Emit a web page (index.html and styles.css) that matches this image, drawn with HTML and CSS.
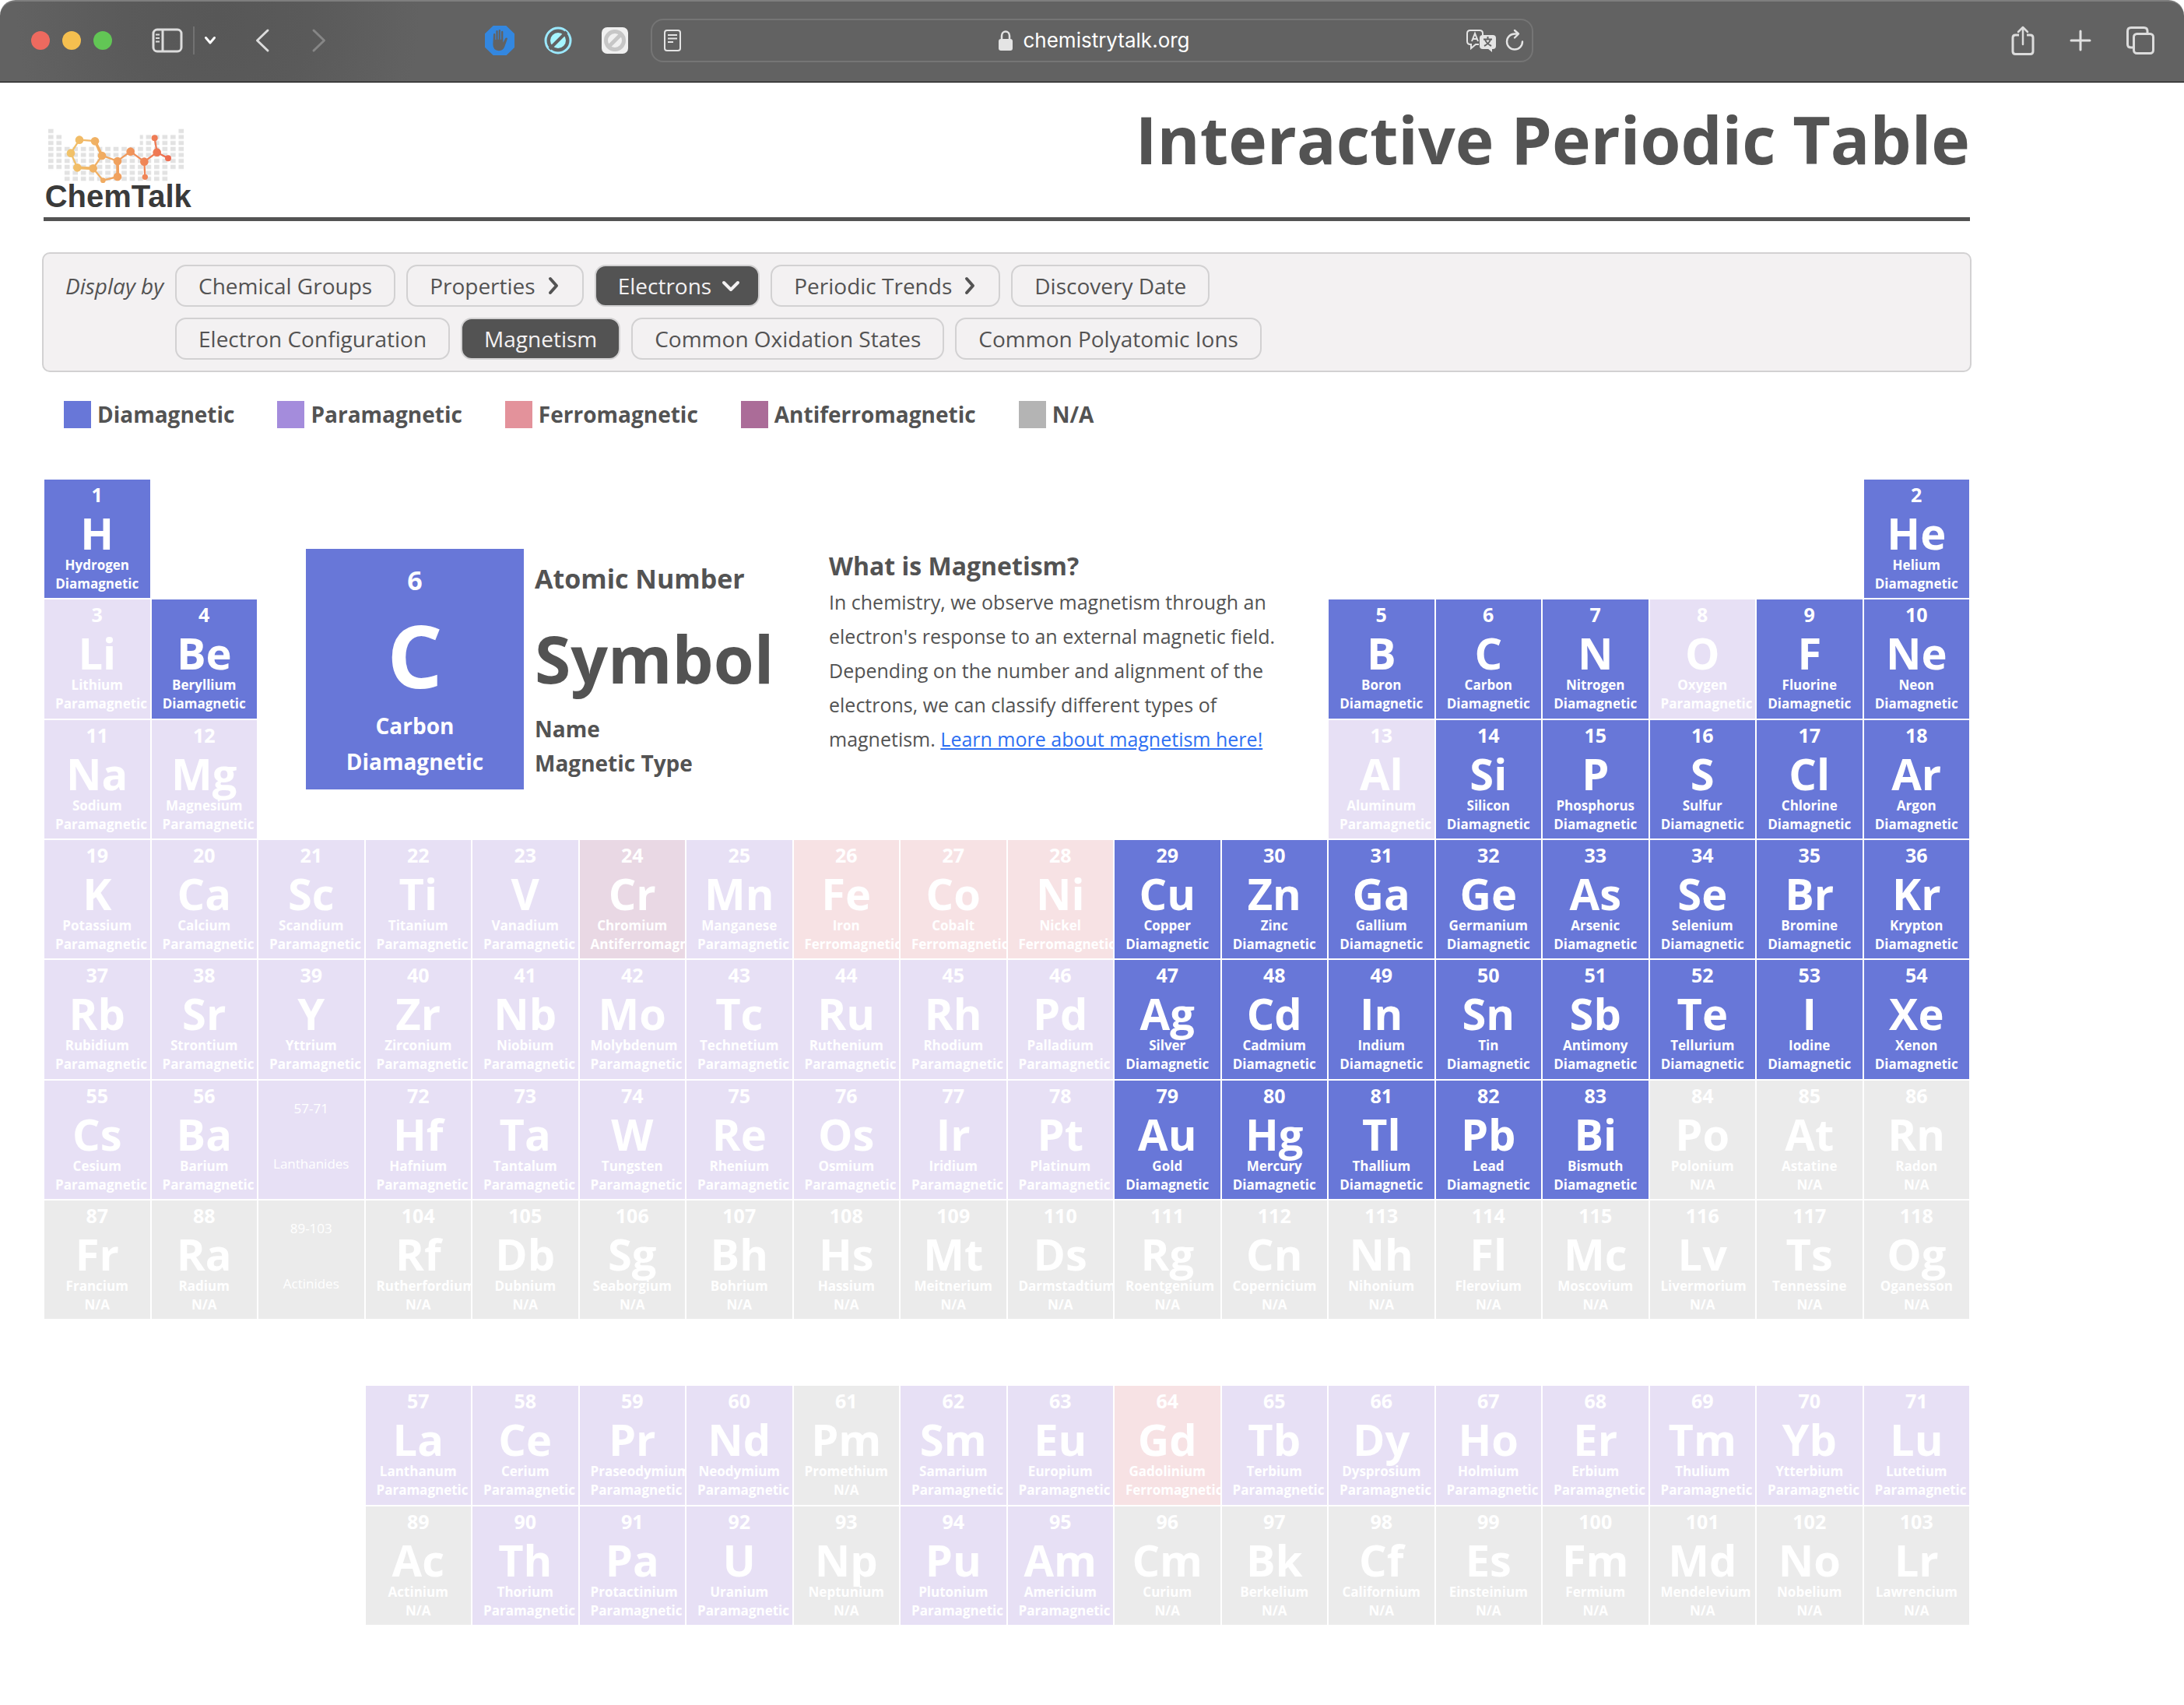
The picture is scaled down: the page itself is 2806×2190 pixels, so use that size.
FILE: index.html
```html
<!DOCTYPE html>
<html lang="en">
<head>
<meta charset="utf-8">
<title>Interactive Periodic Table</title>
<meta name="viewport" content="width=device-width, initial-scale=1">
<link rel="stylesheet" href="styles.css">
</head>
<body>
<div class="toolbar">
  <div class="toolbar-side">
    <div class="lights"><span class="light red"></span><span class="light yellow"></span><span class="light green"></span></div>
    <button class="tool sidebar" aria-label="Sidebar">
      <svg width="40" height="32" viewBox="0 0 40 32" fill="none" stroke="#dcdcdc" stroke-width="3"><rect x="2" y="2" width="36" height="28" rx="5"/><path d="M14 2v28"/><path d="M5 8.500h5M5 13h5M5 17.500h5" stroke-width="2"/></svg>
    </button>
    <span class="divider"></span>
    <button class="tool menu" aria-label="Tab groups">
      <svg width="16" height="12" viewBox="0 0 16 12" fill="none" stroke="#fff" stroke-width="3" stroke-linecap="round" stroke-linejoin="round"><path d="M2.500 2.500 8 9l5.500-6.500"/></svg>
    </button>
    <button class="tool back" aria-label="Back">
      <svg width="18" height="32" viewBox="0 0 18 32" fill="none" stroke="#dcdcdc" stroke-width="3" stroke-linecap="round" stroke-linejoin="round"><path d="M16 3 2.500 16 16 29"/></svg>
    </button>
    <button class="tool forward" aria-label="Forward">
      <svg width="18" height="32" viewBox="0 0 18 32" fill="none" stroke="#868686" stroke-width="3" stroke-linecap="round" stroke-linejoin="round"><path d="M2 3l13.500 13L2 29"/></svg>
    </button>
    <div class="extensions">
      <button class="tool" aria-label="Ad blocker">
        <svg width="38" height="38" viewBox="69 69 114 114"><path fill="#3387e0" d="M101 69h50l32 31v53l-31 30h-51l-32-31v-52z"/><path fill="#626262" d="M102 103q0-4 3.500-4t3.500 4v20h3V91q0-4 3.500-4t3.500 4v31h3V88q0-4 3.500-4t3.500 4v34h3V93q0-4 3.500-4t3.500 4v41l8-15q3-5 8-2.500 2 1-1 8l-9 25q-5 16-22 16-23 0-23-25z"/></svg>
      </button>
      <button class="tool" aria-label="Content blocker">
        <svg width="36" height="36" viewBox="0 0 36 36"><circle cx="18" cy="18" r="16" fill="none" stroke="#9be9ff" stroke-width="3"/><circle cx="18" cy="18" r="10" fill="#a6f6ff"/><path d="M7 29 29 7" stroke="#626262" stroke-width="4"/></svg>
      </button>
      <button class="tool" aria-label="Blocker settings">
        <svg width="34" height="34" viewBox="0 0 34 34"><rect width="34" height="34" rx="7" fill="#f0f0f0"/><circle cx="17" cy="17" r="11.500" fill="none" stroke="#c6c6c6" stroke-width="5"/><path d="M9 25 25 9" stroke="#c6c6c6" stroke-width="5"/></svg>
      </button>
    </div>
  </div>
  <div class="address">
    <svg width="22" height="28" viewBox="0 0 22 28" fill="none" stroke="#e4e4e4" stroke-width="2"><rect x="1" y="1" width="20" height="26" rx="3"/><path d="M5 7h12M5 11.500h12M5 16h7"/></svg>
    <div class="host">
      <svg width="20" height="26" viewBox="0 0 20 26"><rect x="1" y="11" width="18" height="15" rx="3" fill="#e4e4e4"/><path d="M5 12V7a5 5.500 0 0 1 10 0v5" fill="none" stroke="#e4e4e4" stroke-width="2.500"/></svg>
      <span>chemistrytalk.org</span>
    </div>
    <div class="address-tools">
      <svg width="40" height="30" viewBox="0 0 40 30"><path d="M17 20h-4l-6 5v-5H6q-4 0-4-4V6q0-4 4-4h12q4 0 4 4v2" fill="none" stroke="#e4e4e4" stroke-width="2"/><path d="m8 16 4-10 4 10M9.500 13h5" fill="none" stroke="#e4e4e4" stroke-width="2"/><rect x="18" y="8" width="21" height="18" rx="4" fill="#e4e4e4"/><path d="M28 25h6v5z" fill="#e4e4e4"/><path d="M28.500 10v3M23 13.500h11M25 14q2 5 8 8M32 14q-2 5-8 8" fill="none" stroke="#626262" stroke-width="2"/></svg>
      <svg width="24" height="28" viewBox="0 0 24 28" fill="none" stroke="#e4e4e4" stroke-width="2.400" stroke-linecap="round" stroke-linejoin="round"><path d="M22 16.500A10 10 0 1 1 12 6.500h4"/><path d="m12 2 5 4.500-5 5"/></svg>
    </div>
  </div>
  <div class="toolbar-side end">
    <button class="tool" aria-label="Share">
      <svg width="30" height="38" viewBox="0 0 30 38" fill="none" stroke="#dcdcdc" stroke-width="3" stroke-linecap="round" stroke-linejoin="round"><path d="M10 12H5.500Q2 12 2 15.500V33q0 3.500 3.500 3.500h19Q28 36.500 28 33V15.500Q28 12 24.500 12H20" stroke-linecap="butt"/><path d="M15 24V2.500M9 8l6-6 6 6" stroke-width="2.500"/></svg>
    </button>
    <button class="tool plus" aria-label="New tab">
      <svg width="28" height="28" viewBox="0 0 28 28" fill="none" stroke="#e0e0e0" stroke-width="3" stroke-linecap="round"><path d="M14 2v24M2 14h24"/></svg>
    </button>
    <button class="tool" aria-label="All tabs">
      <svg width="36" height="36" viewBox="0 0 36 36" fill="none" stroke="#dcdcdc" stroke-width="3"><rect x="9.500" y="9.500" width="25" height="25" rx="4"/><path d="M9 27H6q-4.500 0-4.500-4V6Q1.500 1.500 6 1.500h16.500Q27 1.500 27 6v3"/></svg>
    </button>
  </div>
</div>

<main class="page">
  <header class="masthead">
    <a class="logo" href="#" aria-label="ChemTalk">
      <svg width="192" height="106" viewBox="18 24 576 318">
        <defs>
          <pattern id="tiles" x="33" y="30" width="31.400" height="23" patternUnits="userSpaceOnUse"><rect x="3" y="2" width="20" height="16" fill="#e2e2e2"/></pattern>
          <linearGradient id="warm" gradientUnits="userSpaceOnUse" x1="110" y1="0" x2="510" y2="0"><stop offset="0" stop-color="#f1c46a"/><stop offset=".5" stop-color="#f0a05e"/><stop offset="1" stop-color="#ee6a50"/></linearGradient>
        </defs>
        <path fill="url(#tiles)" d="M33 30h27v23h31v46h298V53h145V30h28v161h-60v46H95v-46H33z"/>
        <g fill="none" stroke="url(#warm)" stroke-width="7"><path d="m209 184-61-3-25-56 33-51 60 4 27 57zM209 184l38 46 56-14v-60l-60-22M303 155l50-36 53 39 3 59M406 158l49-36-9-55M455 122l43 23"/><path stroke-width="11" d="m216 78 27 57M148 181l61 3M303 156l1 60"/></g>
        <g fill="url(#warm)"><circle cx="156" cy="74" r="16"/><circle cx="216" cy="79" r="16"/><circle cx="123" cy="125" r="16"/><circle cx="243" cy="135" r="16"/><circle cx="148" cy="181" r="16"/><circle cx="209" cy="184" r="16"/><circle cx="247" cy="230" r="10"/><circle cx="303" cy="156" r="16"/><circle cx="303" cy="216" r="16"/><circle cx="353" cy="119" r="16"/><circle cx="406" cy="158" r="16"/><circle cx="409" cy="217" r="11"/><circle cx="455" cy="122" r="16"/><circle cx="446" cy="67" r="12"/><circle cx="498" cy="145" r="12"/></g>
        <text class="logo-word" x="23" y="333">ChemTalk</text>
      </svg>
    </a>
    <h1>Interactive Periodic Table</h1>
  </header>

  <nav class="filters" aria-label="Display by">
    <span class="filters-label">Display by</span>
    <div class="filter-row">
      <button class="pill">Chemical Groups</button>
      <button class="pill">Properties<svg class="arrow" width="20" height="24" viewBox="0 0 20 24"><path d="M7 3l8 9-8 9"/></svg></button>
      <button class="pill active">Electrons<svg class="arrow" width="20" height="24" viewBox="0 0 20 24"><path d="M4 8l9 9 9-9"/></svg></button>
      <button class="pill">Periodic Trends<svg class="arrow" width="20" height="24" viewBox="0 0 20 24"><path d="M7 3l8 9-8 9"/></svg></button>
      <button class="pill">Discovery Date</button>
    </div>
    <div class="filter-row">
      <button class="pill">Electron Configuration</button>
      <button class="pill active">Magnetism</button>
      <button class="pill">Common Oxidation States</button>
      <button class="pill">Common Polyatomic Ions</button>
    </div>
  </nav>

  <ul class="legend">
    <li><span class="swatch dia"></span>Diamagnetic</li>
    <li><span class="swatch para"></span>Paramagnetic</li>
    <li><span class="swatch ferro"></span>Ferromagnetic</li>
    <li><span class="swatch anti"></span>Antiferromagnetic</li>
    <li><span class="swatch na"></span>N/A</li>
  </ul>

  <section class="elements" id="main-block" aria-label="Elements">
    <div class="key">
      <div class="key-card dia">
        <span class="key-number">6</span>
        <span class="key-symbol">C</span>
        <span class="key-line">Carbon</span>
        <span class="key-line">Diamagnetic</span>
      </div>
      <div class="key-labels">
        <span class="label-number">Atomic Number</span>
        <span class="label-symbol">Symbol</span>
        <span class="label-line">Name</span>
        <span class="label-line">Magnetic Type</span>
      </div>
      <article class="about">
        <h2>What is Magnetism?</h2>
        <p>In chemistry, we observe magnetism through an electron's response to an external magnetic field. Depending on the number and alignment of the electrons, we can classify different types of magnetism. <a href="#">Learn more about magnetism here!</a></p>
      </article>
    </div>
  </section>
  <section class="elements series" id="series-block" aria-label="Lanthanides and actinides"></section>
</main>
<script src="script.js"></script>
</body>
</html>
```
FILE: styles.css
```css
* { box-sizing: border-box; }

body {
  margin: 0;
  background: #fff;
  color: #535353;
  font-family: "Open Sans", "Noto Sans", sans-serif;
}

button {
  margin: 0;
  padding: 0;
  border: 0;
  background: none;
  color: inherit;
  font: inherit;
}

svg { display: block; flex: none; overflow: visible; }

/* Browser toolbar */
.toolbar {
  display: grid;
  grid-template-columns: 1fr minmax(0, 1134px) 1fr;
  align-items: center;
  height: 106px;
  padding-bottom: 3px;
  border-top: 2px solid #7e7e7e;
  border-bottom: 1px solid #000;
  border-radius: 20px 20px 0 0;
  background: radial-gradient(circle at 280px 20px, #575757 0, #5a5a5a 120px, #626262 260px);
}

.toolbar-side {
  display: flex;
  align-items: center;
  padding: 0 29px 0 40px;
}

.toolbar-side.end {
  justify-content: flex-end;
  gap: 45px;
  padding: 0 38px 0 0;
}

.lights { display: flex; gap: 16px; }
.light { width: 24px; height: 24px; border-radius: 50%; }
.red { background: #ed6a5f; }
.yellow { background: #f5bf4f; }
.green { background: #62c655; }

.sidebar { margin-left: 51px; }
.divider { width: 2px; height: 36px; margin-left: 13px; background: #727272; }
.menu { margin-left: 12px; }
.back { margin-left: 50px; }
.forward { margin-left: 55px; }
.extensions { display: flex; align-items: center; gap: 38px; margin-left: auto; }

.address {
  display: grid;
  grid-template-columns: 1fr auto 1fr;
  align-items: center;
  height: 56px;
  padding: 0 10px 0 15px;
  border: 2px solid #757575;
  border-radius: 16px;
}

.host {
  display: flex;
  align-items: center;
  gap: 12px;
  color: #fff;
  font: 26px/32px Inter, sans-serif;
}

.address-tools { display: flex; justify-content: flex-end; gap: 11px; }

/* Page */
.page { margin: 0 275px 0 56px; }

.masthead {
  display: flex;
  align-items: flex-start;
  justify-content: space-between;
  padding: 16px 0 10px;
  border-bottom: 5px solid #535353;
}

.logo { margin-top: 41px; }
.logo-word { fill: #3a3a3a; font: bold 120px "Liberation Sans", sans-serif; }

h1 { margin: 0; font-size: 84px; line-height: 114px; }

.filters {
  display: grid;
  grid-template-columns: 126px 1fr;
  gap: 14px 15px;
  align-items: center;
  margin: 40px -2px 0;
  padding: 14px 28px;
  border: 2px solid #d2d1d2;
  border-radius: 10px;
  background: #f3f1f2;
  font-size: 28px;
}

.filters-label { font-style: italic; white-space: nowrap; }

.filter-row {
  display: flex;
  flex-wrap: wrap;
  grid-column: 2;
  gap: 14px;
}

.pill {
  display: flex;
  align-items: center;
  padding: 6px 28px;
  border: 2px solid #d2d1d2;
  border-radius: 14px;
  line-height: 38px;
}

.pill.active { background: #535353; color: #f3f1f2; }

.arrow {
  margin-left: 12px;
  fill: none;
  stroke: currentColor;
  stroke-width: 4;
  stroke-linecap: round;
  stroke-linejoin: round;
}

.legend {
  display: flex;
  flex-wrap: wrap;
  gap: 16px 55px;
  margin: 35px 0 0;
  padding: 0 26px;
  list-style: none;
  font-size: 28px;
  font-weight: 700;
  line-height: 38px;
}

.legend li { display: flex; align-items: center; gap: 8px; }
.swatch { width: 35px; height: 35px; }

.dia { background: #6877d8; }
.para { background: #a48cdc; }
.ferro { background: #e3929b; }
.anti { background: #ab6c98; }
.na { background: #b4b4b4; }

/* Element grid */
.elements {
  display: grid;
  grid-template-columns: repeat(18, minmax(0, 1fr));
  margin-top: 64px;
}

.series { margin: 84px 0 100px; }

.cell {
  display: flex;
  flex-direction: column;
  justify-content: flex-start;
  aspect-ratio: 49 / 55;
  min-width: 0;
  min-height: 0;
  overflow: hidden;
  padding: 2px 14px 0;
  border: 1px solid #fff;
  color: #fff;
  font-weight: 700;
  text-align: center;
  white-space: nowrap;
}

.faded { opacity: 0.26; }

.number { font-size: 25px; line-height: 34px; }
.symbol {
  display: flex;
  justify-content: center;
  margin-top: 2px;
  font-size: 56px;
  line-height: 60px;
}
.name, .type { font-size: 17px; line-height: 24px; }

.range {
  gap: 47px;
  padding-top: 24px;
  font-size: 17px;
  font-weight: 400;
  line-height: 24px;
}

/* Colour key and description */
.key {
  display: flex;
  grid-area: 1 / 3 / 4 / 13;
  align-items: flex-start;
  padding: 90px 0 0 62px;
  font-weight: 700;
}

.key-card {
  display: flex;
  flex-direction: column;
  width: 280px;
  padding: 17px 0 13px;
  color: #fff;
  text-align: center;
}

.key-number { font-size: 34px; line-height: 46px; }
.key-symbol { margin-top: 5px; font-size: 112px; line-height: 136px; }
.key-line { font-size: 28px; line-height: 46px; }

.key-labels {
  display: flex;
  flex-direction: column;
  width: 378px;
  margin: 15px 0 0 14px;
}

.label-number { font-size: 34px; line-height: 46px; }
.label-symbol { margin: 20px 0 8px; font-size: 84px; line-height: 120px; }
.label-line { font-size: 28px; line-height: 44px; }

.about { width: 590px; }
.about h2 { margin: 0 0 2px; font-size: 32px; line-height: 44px; }
.about p { margin: 0; font-size: 25px; font-weight: 400; line-height: 44px; }
.about a { color: #2e6ff2; }
```
FILE: script.js
```js
// Each row: first column, grid row, then "number symbol name type" entries.
const TYPES = {
  D: ["dia", "Diamagnetic"],
  P: ["para", "Paramagnetic"],
  F: ["ferro", "Ferromagnetic"],
  A: ["anti", "Antiferromagnetic"],
  N: ["na", "N/A"]
};

const MAIN = [
  [1, 1, "1 H Hydrogen D"],
  [18, 1, "2 He Helium D"],
  [1, 2, "3 Li Lithium P,4 Be Beryllium D"],
  [13, 2, "5 B Boron D,6 C Carbon D,7 N Nitrogen D,8 O Oxygen P,9 F Fluorine D,10 Ne Neon D"],
  [1, 3, "11 Na Sodium P,12 Mg Magnesium P"],
  [13, 3, "13 Al Aluminum P,14 Si Silicon D,15 P Phosphorus D,16 S Sulfur D,17 Cl Chlorine D,18 Ar Argon D"],
  [1, 4, "19 K Potassium P,20 Ca Calcium P,21 Sc Scandium P,22 Ti Titanium P,23 V Vanadium P,24 Cr Chromium A,25 Mn Manganese P,26 Fe Iron F,27 Co Cobalt F,28 Ni Nickel F,29 Cu Copper D,30 Zn Zinc D,31 Ga Gallium D,32 Ge Germanium D,33 As Arsenic D,34 Se Selenium D,35 Br Bromine D,36 Kr Krypton D"],
  [1, 5, "37 Rb Rubidium P,38 Sr Strontium P,39 Y Yttrium P,40 Zr Zirconium P,41 Nb Niobium P,42 Mo Molybdenum P,43 Tc Technetium P,44 Ru Ruthenium P,45 Rh Rhodium P,46 Pd Palladium P,47 Ag Silver D,48 Cd Cadmium D,49 In Indium D,50 Sn Tin D,51 Sb Antimony D,52 Te Tellurium D,53 I Iodine D,54 Xe Xenon D"],
  [1, 6, "55 Cs Cesium P,56 Ba Barium P,57-71 Lanthanides P,72 Hf Hafnium P,73 Ta Tantalum P,74 W Tungsten P,75 Re Rhenium P,76 Os Osmium P,77 Ir Iridium P,78 Pt Platinum P,79 Au Gold D,80 Hg Mercury D,81 Tl Thallium D,82 Pb Lead D,83 Bi Bismuth D,84 Po Polonium N,85 At Astatine N,86 Rn Radon N"],
  [1, 7, "87 Fr Francium N,88 Ra Radium N,89-103 Actinides N,104 Rf Rutherfordium N,105 Db Dubnium N,106 Sg Seaborgium N,107 Bh Bohrium N,108 Hs Hassium N,109 Mt Meitnerium N,110 Ds Darmstadtium N,111 Rg Roentgenium N,112 Cn Copernicium N,113 Nh Nihonium N,114 Fl Flerovium N,115 Mc Moscovium N,116 Lv Livermorium N,117 Ts Tennessine N,118 Og Oganesson N"]
];

const SERIES = [
  [4, 1, "57 La Lanthanum P,58 Ce Cerium P,59 Pr Praseodymium P,60 Nd Neodymium P,61 Pm Promethium N,62 Sm Samarium P,63 Eu Europium P,64 Gd Gadolinium F,65 Tb Terbium P,66 Dy Dysprosium P,67 Ho Holmium P,68 Er Erbium P,69 Tm Thulium P,70 Yb Ytterbium P,71 Lu Lutetium P"],
  [4, 2, "89 Ac Actinium N,90 Th Thorium P,91 Pa Protactinium P,92 U Uranium P,93 Np Neptunium N,94 Pu Plutonium P,95 Am Americium P,96 Cm Curium N,97 Bk Berkelium N,98 Cf Californium N,99 Es Einsteinium N,100 Fm Fermium N,101 Md Mendelevium N,102 No Nobelium N,103 Lr Lawrencium N"]
];

function addText(parent, className, text) {
  const span = document.createElement("span");
  span.className = className;
  span.textContent = text;
  parent.append(span);
}

function fill(id, rows) {
  const block = document.getElementById(id);
  for (const [column, row, entries] of rows) {
    entries.split(",").forEach((entry, index) => {
      const parts = entry.split(" ");
      const [color, type] = TYPES[parts.pop()];
      const cell = document.createElement("button");
      cell.className = "cell " + color + (color === "dia" ? "" : " faded");
      cell.style.gridArea = row + " / " + (column + index);
      if (parts.length === 2) {
        cell.classList.add("range");
        addText(cell, "range-line", parts[0]);
        addText(cell, "range-line", parts[1]);
      } else {
        addText(cell, "number", parts[0]);
        addText(cell, "symbol", parts[1]);
        addText(cell, "name", parts[2]);
        addText(cell, "type", type);
      }
      block.append(cell);
    });
  }
}

fill("main-block", MAIN);
fill("series-block", SERIES);
```
